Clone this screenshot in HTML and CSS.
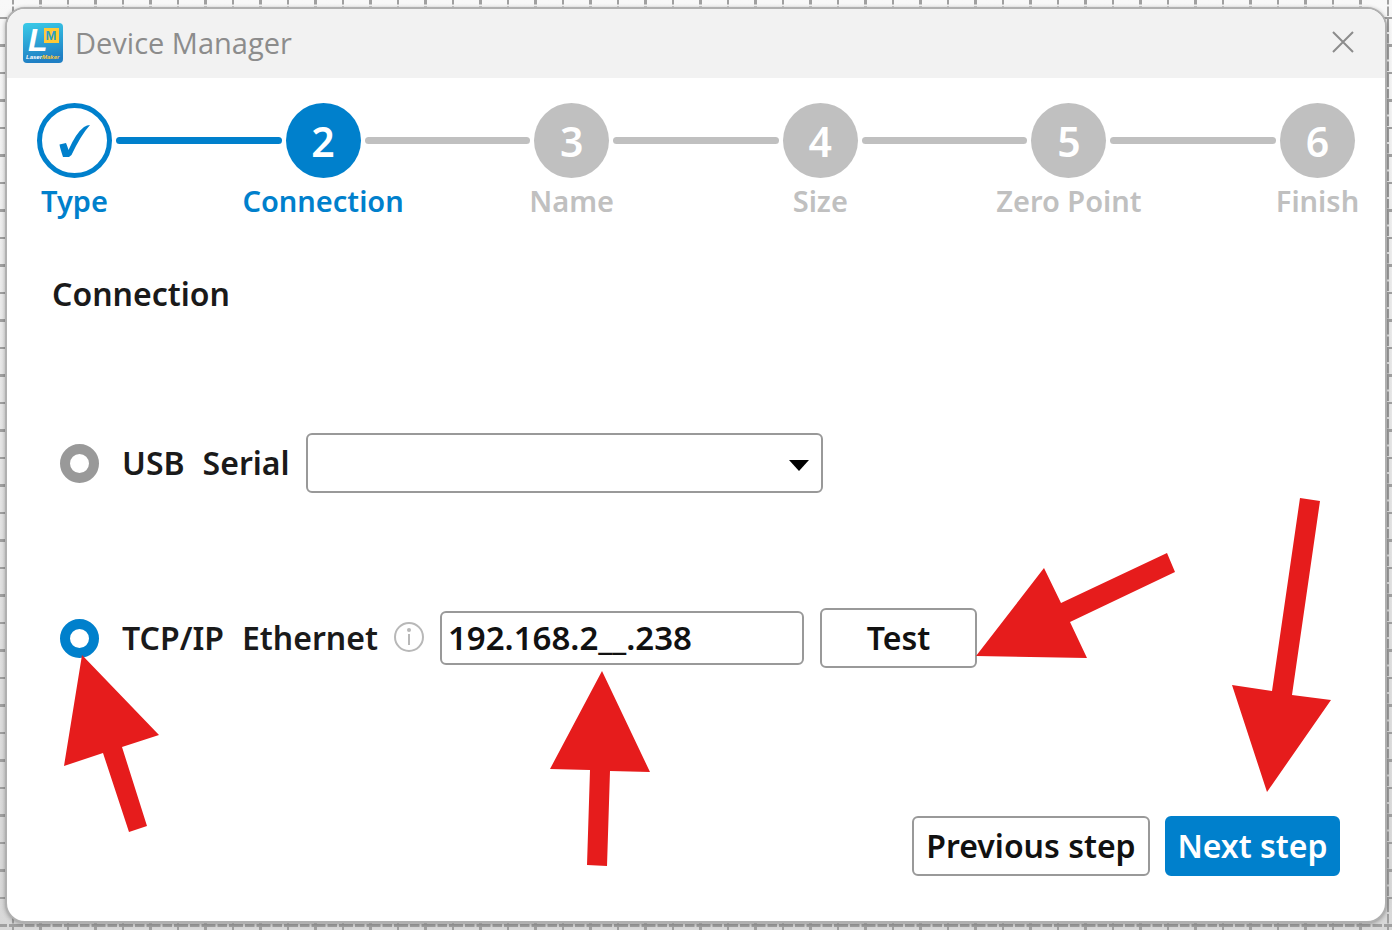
FILE: index.html
```html
<!DOCTYPE html>
<html lang="en">
<head>
    <meta charset="UTF-8">
    <title>Device Manager</title>
    <link rel="stylesheet" href="styles.css">
</head>
<body>
    <!-- Canvas grid behind the dialog -->
    <svg class="grid" aria-hidden="true">
        <defs>
            <pattern id="gridLines" x="11" y="16" width="55" height="55" patternUnits="userSpaceOnUse">
                <g stroke="#a0a0a0" stroke-dasharray="12 2 9.500 2 2 0">
                    <path d="M0 2H55" stroke-width="2"/>
                    <path d="M0 29.500H55" stroke-width="3"/>
                    <path d="M2 0V55" stroke-width="2" stroke-dashoffset="-4"/>
                    <path d="M29.500 0V55" stroke-width="3" stroke-dashoffset="-4"/>
                </g>
            </pattern>
        </defs>
        <rect width="100%" height="100%" fill="url(#gridLines)"/>
    </svg>

    <main class="dialog">
        <!-- Title bar -->
        <header class="title-bar">
            <svg class="logo" viewBox="0 0 40 40" aria-hidden="true">
                <defs>
                    <linearGradient id="logoFill" x1="0" y1="0" x2="0.2" y2="1">
                        <stop offset="0" stop-color="#3acbe8"/>
                        <stop offset="1" stop-color="#1f7fc4"/>
                    </linearGradient>
                </defs>
                <rect width="40" height="40" rx="4" fill="url(#logoFill)"/>
                <text x="5" y="28" class="logo-l">L</text>
                <rect x="21" y="5" width="15" height="15" fill="#ffc936"/>
                <text x="28" y="17" class="logo-m">M</text>
                <text x="3" y="36" class="logo-name">Laser<tspan fill="#ffc936">Maker</tspan></text>
            </svg>
            <h1>Device Manager</h1>
            <button class="close" aria-label="Close">
                <svg width="22" height="22" viewBox="0 0 22 22"><path d="M1 1L21 21M21 1L1 21" stroke="#8c8c8c" stroke-width="2"/></svg>
            </button>
        </header>

        <!-- Progress steps -->
        <ol class="steps">
            <li class="step done">
                <span class="circle">
                    <svg width="32" height="34" viewBox="0 0 32 34"><path d="M0.500 20.500L7 19Q9 24 9.500 26Q17 9 25 3Q28 1 31 1Q22 11 12.500 31L10 33H4Q1 24 .5 20.500Z" fill="#0080cc"/></svg>
                </span>
                <span class="name">Type</span>
            </li>
            <li class="line done"></li>
            <li class="step active"><span class="circle">2</span><span class="name">Connection</span></li>
            <li class="line"></li>
            <li class="step"><span class="circle">3</span><span class="name">Name</span></li>
            <li class="line"></li>
            <li class="step"><span class="circle">4</span><span class="name">Size</span></li>
            <li class="line"></li>
            <li class="step"><span class="circle">5</span><span class="name">Zero Point</span></li>
            <li class="line"></li>
            <li class="step"><span class="circle">6</span><span class="name">Finish</span></li>
        </ol>

        <!-- Connection form -->
        <form class="connection">
            <h2>Connection</h2>

            <div class="row">
                <input type="radio" name="link" id="usb">
                <label for="usb"><span>USB</span><span>Serial</span></label>
                <div class="select-box">
                    <select aria-label="Serial port"><option></option></select>
                    <svg class="caret" width="20" height="11" viewBox="0 0 20 11"><path d="M0 0H20L10 11Z"/></svg>
                </div>
            </div>

            <div class="row">
                <div class="target">
                    <input type="radio" name="link" id="tcp" checked>
                    <svg class="arrow arrow-radio" width="96" height="178" viewBox="0 0 96 178"><path d="M18 0L95 80L58 92L83 171L65 177L39 98L0 111Z"/></svg>
                </div>
                <label for="tcp"><span>TCP/IP</span><span>Ethernet</span></label>
                <svg class="info" width="30" height="30" viewBox="0 0 30 30">
                    <circle cx="15" cy="15" r="14" fill="none" stroke="#b8b8b8" stroke-width="2"/>
                    <path d="M15 12V23" stroke="#b8b8b8" stroke-width="2"/>
                    <circle cx="15" cy="8" r="2" fill="#b8b8b8"/>
                </svg>
                <div class="target">
                    <input type="text" class="ip" value="192.168.2__.238" aria-label="IP address">
                    <svg class="arrow arrow-ip" width="100" height="196" viewBox="0 0 100 196"><path d="M52 0L100 101L60 100L57 195L37 194L40 99L0 98Z"/></svg>
                </div>
                <div class="target">
                    <button type="button" class="test">Test</button>
                    <svg class="arrow arrow-test" width="200" height="105" viewBox="0 0 200 105"><path d="M0 103L68 15L85 50L191 0L199 19L94 69L111 105Z"/></svg>
                </div>
            </div>

            <div class="actions">
                <button type="button">Previous step</button>
                <div class="target">
                    <button type="submit" class="primary">Next step</button>
                    <svg class="arrow arrow-next" width="100" height="294" viewBox="0 0 100 294"><path d="M68 0L88 3L60 197L99 202L35 294L0 187L40 193Z"/></svg>
                </div>
            </div>
        </form>
    </main>
</body>
</html>
```
FILE: styles.css
```css
* {
    box-sizing: border-box;
}

body {
    margin: 0;
    padding: 7px 5px 7px 5px;
    min-height: 100vh;
    display: flex;
    background: linear-gradient(#f8f8f8, #e8e8e8 40%, #d8d8d8);
    font-family: "Noto Sans", "Open Sans", sans-serif;
    font-weight: 600;
    font-size: 32px;
    color: #1a1a1a;
}

.grid {
    position: absolute;
    top: 0;
    left: 0;
    width: 100%;
    height: 100%;
}

/* Dialog window */
.dialog {
    position: relative;
    flex: 1;
    display: flex;
    flex-direction: column;
    border: 2px solid #b0b0b0;
    border-radius: 20px;
    background: white;
    box-shadow: 0 1px 4px rgba(0, 0, 0, 0.3);
}

.title-bar {
    display: flex;
    align-items: center;
    gap: 12px;
    height: 69px;
    padding: 0 31px 2px 16px;
    border-radius: 18px 18px 0 0;
    background: #f2f2f2;
}

.logo {
    width: 40px;
    height: 40px;
}

.logo-l {
    font: italic bold 32px "Liberation Sans", sans-serif;
    fill: white;
}

.logo-m {
    font: bold 13px "Liberation Sans", sans-serif;
    fill: #2a9fc4;
    text-anchor: middle;
}

.logo-name {
    font: italic bold 6px "Liberation Sans", sans-serif;
    fill: white;
}

h1 {
    flex: 1;
    margin: 0;
    font-family: "Open Sans", sans-serif;
    font-size: 29px;
    font-weight: 400;
    color: #8c8c8c;
}

/* Steps */
.steps {
    display: flex;
    margin: 0;
    padding: 25px 30px 0;
    list-style: none;
}

.step {
    display: flex;
    flex-direction: column;
    align-items: center;
    width: 75px;
    color: #c0c0c0;
}

.circle {
    display: flex;
    align-items: center;
    justify-content: center;
    width: 75px;
    height: 75px;
    border-radius: 50%;
    background: #c0c0c0;
    color: white;
    font-size: 41px;
}

.name {
    margin-top: 3px;
    font-size: 29px;
    line-height: 40px;
    white-space: nowrap;
}

.step.done,
.step.active {
    color: #0080cc;
}

.step.active .circle {
    background: #0080cc;
}

.step.done .circle {
    border: 5px solid #0080cc;
    background: white;
}

.line {
    flex: 1;
    height: 7px;
    margin: 34px 4px 0;
    border-radius: 4px;
    background: #c0c0c0;
}

.line.done {
    background: #0080cc;
}

/* Form */
.connection {
    flex: 1;
    display: flex;
    flex-direction: column;
    padding: 0 45px 45px 45px;
}

h2 {
    margin: 49px 0 115px;
    font-size: 32px;
    font-weight: 600;
    line-height: 48px;
}

.row {
    display: flex;
    align-items: center;
    height: 60px;
    margin-bottom: 115px;
    padding-left: 8px;
}

.target {
    position: relative;
    display: flex;
}

input[type="radio"] {
    appearance: none;
    width: 39px;
    height: 39px;
    margin: 0;
    border: 10px solid #999;
    border-radius: 50%;
}

input[type="radio"]:checked {
    border-color: #0080cc;
}

label {
    display: flex;
    gap: 18px;
    margin: 0 16px 0 23px;
    padding-bottom: 2px;
    white-space: nowrap;
}

select,
button,
input[type="text"] {
    border: 2px solid #999;
    border-radius: 6px;
    background: white;
    color: #111;
    font: inherit;
}

.select-box {
    position: relative;
}

select {
    display: block;
    appearance: none;
    width: 517px;
    height: 60px;
}

.caret {
    position: absolute;
    top: 27px;
    right: 14px;
}

.info {
    margin: 0 16px 3px 0;
}

input[type="text"].ip {
    width: 364px;
    height: 54px;
    margin-right: 16px;
    padding: 0 6px 2px;
    font-size: 33px;
}

button {
    height: 60px;
    padding: 0 0 2px;
    white-space: nowrap;
    cursor: pointer;
}

.test {
    width: 157px;
}

.actions {
    display: flex;
    justify-content: flex-end;
    gap: 15px;
    margin-top: auto;
}

.actions button {
    width: 238px;
}

.actions .primary {
    width: 175px;
    border-color: #0080cc;
    background: #0080cc;
    color: white;
}

.title-bar .close {
    display: flex;
    height: auto;
    border: none;
    background: none;
}

/* Red pointers */
.arrow {
    position: absolute;
    fill: #e61c1c;
    pointer-events: none;
}

.arrow-radio {
    top: 36px;
    left: 4px;
}

.arrow-ip {
    top: 60px;
    left: 110px;
}

.arrow-test {
    top: -55px;
    left: 156px;
}

.arrow-next {
    bottom: 84px;
    left: 67px;
}
```
